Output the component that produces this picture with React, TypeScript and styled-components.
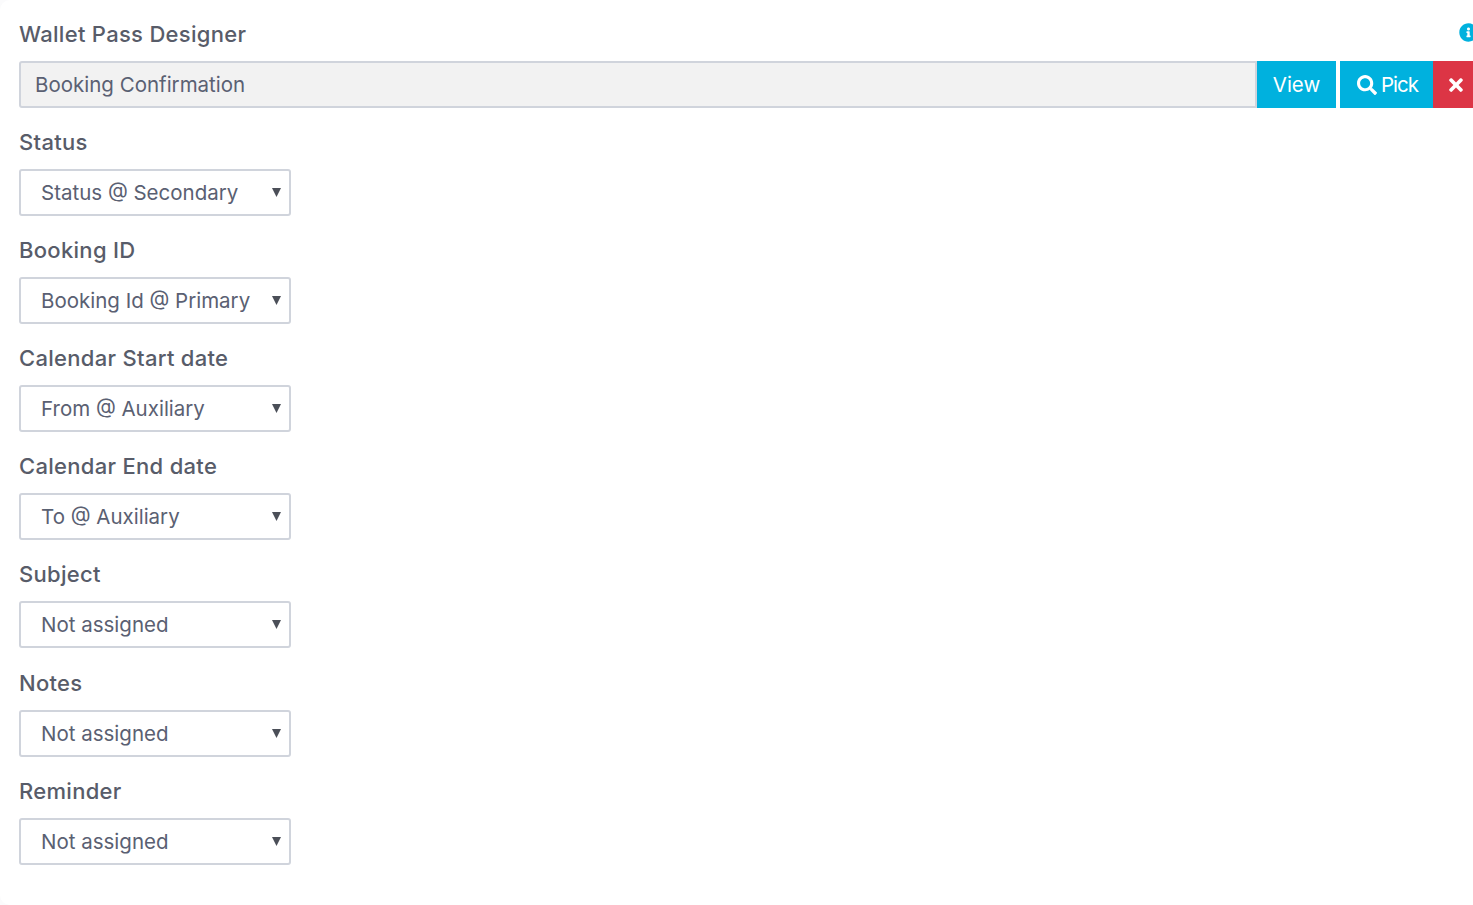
import React from "react";
import styled, { createGlobalStyle } from "styled-components";
import { FaInfoCircle, FaSearch, FaTimes } from "react-icons/fa";

const Global = createGlobalStyle`
  html, body { margin: 0; padding: 0; background: #fbfbfc; overflow: hidden; }
  #root { height: 905px; }
`;

const Card = styled.div`
  height: 905px;
  background: #fff;
  border-radius: 10px 0 0 10px;
  padding: 0 0 0 19px;
  box-sizing: border-box;
  overflow: hidden;
  font-family: Inter, "Open Sans", "Liberation Sans", sans-serif;
  color: #4f5464;
`;

const Field = styled.div`
  height: 108.1px;
`;

const LabelRow = styled.div`
  height: 61px;
  display: flex;
  align-items: center;
  justify-content: space-between;
  padding-top: 8px;
  box-sizing: border-box;
`;

const Label = styled.label`
  display: block;
  font-size: 22px;
  font-weight: 500;
  line-height: 27px;
  letter-spacing: 0.3px;
  color: #585c69;
  white-space: nowrap;
`;

const InfoIcon = styled(FaInfoCircle)`
  color: #00b1de;
  font-size: 19px;
  margin-right: -5px;
  margin-top: -5px;
  flex: none;
`;

const InputGroup = styled.div`
  display: flex;
  height: 47px;
`;

const ReadOnly = styled.div`
  flex: 1;
  display: flex;
  align-items: center;
  background: #f2f2f2;
  border: 2px solid #d0d4dc;
  border-radius: 3px 0 0 3px;
  padding-left: 14px;
  font-size: 20.5px;
  color: #5a6072;
`;

const Button = styled.button<{ $danger?: boolean; $w: number; $gap?: number }>`
  width: ${(p) => p.$w}px;
  margin-left: ${(p) => p.$gap ?? 0}px;
  flex: none;
  height: 47px;
  border: 0;
  padding: 0;
  display: inline-flex;
  align-items: center;
  justify-content: center;
  gap: 4px;
  font-family: inherit;
  font-size: 20.5px;
  color: #fff;
  background: ${(p) => (p.$danger ? "#dc3545" : "#00b1de")};
`;

const PickButton = styled(Button)`
  justify-content: flex-start;
  padding-left: 17px;
  letter-spacing: -1px;
`;

const CloseButton = styled(Button)`
  padding-left: 6px;
`;

const SelectBox = styled.div`
  position: relative;
  width: 272px;
  height: 47px;
`;

const Select = styled.select`
  appearance: none;
  width: 100%;
  height: 100%;
  box-sizing: border-box;
  background: #fff;
  border: 2px solid #d0d4dc;
  border-radius: 3px;
  padding: 0 0 0 20px;
  font-family: inherit;
  font-size: 20.5px;
  color: #5a6072;
  outline: none;
`;

const Arrow = styled.svg`
  position: absolute;
  right: 10px;
  top: 19px;
  width: 9px;
  height: 9px;
  fill: #4b4f58;
  pointer-events: none;
`;

const fields: [string, string][] = [
  ["Status", "Status @ Secondary"],
  ["Booking ID", "Booking Id @ Primary"],
  ["Calendar Start date", "From @ Auxiliary"],
  ["Calendar End date", "To @ Auxiliary"],
  ["Subject", "Not assigned"],
  ["Notes", "Not assigned"],
  ["Reminder", "Not assigned"],
];

export default function App() {
  return (
    <>
      <Global />
      <Card>
        <Field>
          <LabelRow>
            <Label>Wallet Pass Designer</Label>
            <InfoIcon />
          </LabelRow>
          <InputGroup>
            <ReadOnly>Booking Confirmation</ReadOnly>
            <Button $w={79}>View</Button>
            <PickButton $w={93} $gap={4}>
              <FaSearch size={20} />
              Pick
            </PickButton>
            <CloseButton $w={40} $danger>
              <FaTimes size={20} />
            </CloseButton>
          </InputGroup>
        </Field>
        {fields.map(([label, value]) => (
          <Field key={label}>
            <LabelRow>
              <Label>{label}</Label>
            </LabelRow>
            <SelectBox>
              <Select defaultValue={value}>
                <option>{value}</option>
              </Select>
              <Arrow viewBox="0 0 9 9">
                <path d="M0 0h9L4.5 9z" />
              </Arrow>
            </SelectBox>
          </Field>
        ))}
      </Card>
    </>
  );
}
